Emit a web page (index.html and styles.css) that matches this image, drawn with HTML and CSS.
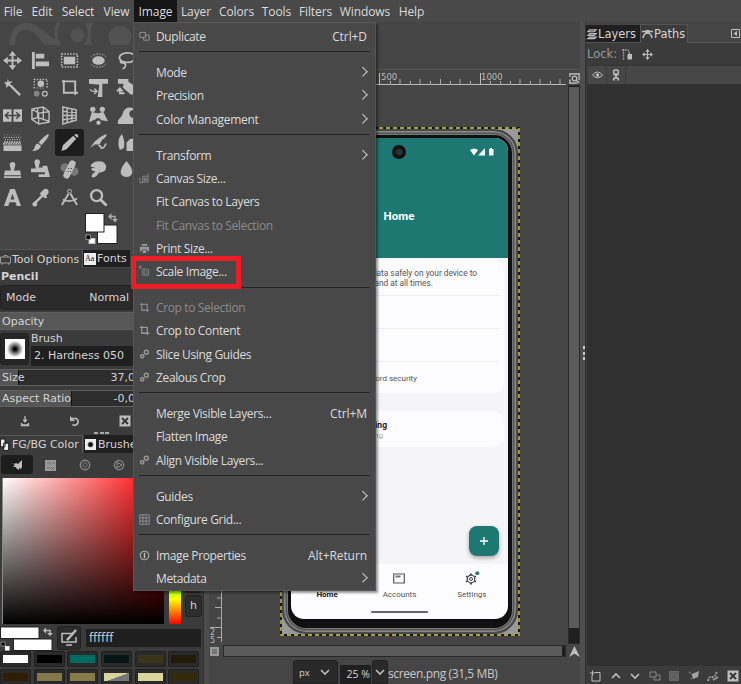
FILE: index.html
```html
<!DOCTYPE html>
<html lang="en">
<head>
<meta charset="utf-8">
<title>Image Editor</title>
<link rel="stylesheet" href="styles.css">
</head>
<body>
<nav class="menubar">
  <span class="m-file">File</span><span class="m-edit">Edit</span><span class="m-select">Select</span><span class="m-view">View</span><span class="m-image open">Image</span><span class="m-layer">Layer</span><span class="m-colors">Colors</span><span class="m-tools">Tools</span><span class="m-filters">Filters</span><span class="m-windows">Windows</span><span class="m-help">Help</span>
</nav>
<main class="workspace">
  <aside class="left">
    <svg class="banner" width="200" height="24" viewBox="0 0 200 24">
      <g fill="#525252" stroke="none"><path d="M8 22C8 8 15 0 25 0C38 0 44 12 54 16C52 10 53 4 55 0H59C54 8 56 16 60 22H44C38 18 35 7 24 7C16 7 13 15 14 22Z"/><path d="M83 0H92C88 8 88 15 91 22H82C87 15 88 7 83 0Z"/><circle cx="76" cy="12.500" r="7"/><path d="M110 22A11.500 11.500 0 1 1 127 22Z"/></g>
    </svg>
    <div class="tools">
      <i><svg viewBox="0 0 20 20"><path d="M10 2V18M2 10H18" stroke-width="2"/><path class="f" d="M10 0L14 5H6ZM10 20L14 15H6ZM0 10L5 6V14ZM20 10L15 6V14Z"/></svg></i>
      <i><svg viewBox="0 0 20 20"><path class="f" d="M1 1H4V19H1ZM5 3H14V8H5ZM5 11H19V16H5Z"/></svg></i>
      <i><svg viewBox="0 0 20 20"><rect x="1.700" y="3.200" width="16.600" height="13.600" stroke-dasharray="1.600 1.400" stroke-width="1.600"/><path class="f" d="M4 6H16V14H4Z"/></svg></i>
      <i><svg viewBox="0 0 20 20"><path d="M2.500 6C6 2 14 2 17.500 6M2.500 14C6 18 14 18 17.500 14" stroke-dasharray="1.500 1.500"/><ellipse class="f" cx="10" cy="10" rx="6.500" ry="4.500"/></svg></i>
      <i><svg viewBox="0 0 20 20"><ellipse cx="11" cy="7" rx="8.500" ry="5" stroke-width="2"/><path d="M4 10C2 15 9 10 9 15C9 17 8 18 6 19" stroke-width="1.700"/></svg></i>
      <i><svg viewBox="0 0 20 20"><path d="M8 8L18 18" stroke-width="2.400"/><path class="f" d="M5 1L6.300 4L10 3.500L7.500 6.300L9.500 9.500L6 8.200L3.200 10.500L3.500 7L1 4.800L4.300 4.300Z"/></svg></i>
      <i><svg viewBox="0 0 20 20"><path d="M3.500 11V1.500H17V11" stroke-dasharray="1.500 1.500" stroke-width="1.500"/><path d="M6 10.500H15" stroke-dasharray="1.500 1.500"/><circle class="f" cx="10.300" cy="6" r="3.500"/><circle cx="6" cy="16.500" r="3" fill="#858585" stroke="none"/><circle cx="14.500" cy="16.500" r="2.500" stroke-width="1.400"/></svg></i>
      <i><svg viewBox="0 0 20 20"><path d="M2 3.500H16V18M4 2V15.500H19" stroke-width="2"/></svg></i>
      <i><svg viewBox="0 0 20 20"><path class="f" d="M0 1H20V6H14V20H9L11 7L0 6Z"/><path d="M1 12Q3 15 8 14M5.500 11L8.500 14L5.500 17" stroke-width="1.400"/></svg></i>
      <i><svg viewBox="0 0 20 20"><path class="f" d="M1 1H12V4L18 8L22 0V14L15 18L6 10L7 6H1Z"/><path d="M3 12V16H8M0 14L3 11L6 14" stroke-width="2"/></svg></i>
      <i><svg viewBox="0 0 20 20"><path class="f" d="M0 3.500H9V16.500H0ZM11 3.500H20V16.500H11Z"/><path d="M3 10H17M6 6.500L2.500 10L6 13.500M14 6.500L17.500 10L14 13.500" stroke="#444" stroke-width="1.600"/></svg></i>
      <i><svg viewBox="0 0 20 20"><path d="M1 3L13 1L19 6V17L8 19L1 14ZM1 3L8 7.500L19 6M8 7.500V19M7 2V12L1 14M7 12L19 16M13 1V15" stroke-width="1.500"/></svg></i>
      <i><svg viewBox="0 0 20 20"><path d="M3 1L17 4V15L3 19ZM3 5.500L17 7M3 10H17M3 14.500L17 12.500M7.500 2V18M12.500 3V17" stroke-width="1.500"/></svg></i>
      <i><svg viewBox="0 0 20 20"><circle class="f" cx="4" cy="3.500" r="2.800"/><circle class="f" cx="14" cy="3.500" r="2.800"/><path class="f" d="M3 6Q9 9 15 6L20 16L13 15Q10 11 7 14L0 17Z"/><circle class="f" cx="10" cy="17.500" r="2.300"/></svg></i>
      <i><svg viewBox="0 0 20 20"><path class="f" d="M1 19C0 13 5 13 6 8C8 1 15 0 19 4C13 4 11 8 15 12H20V19Z"/></svg></i>
      <i><svg viewBox="0 0 20 20"><path d="M1 2H19" stroke-width="1" stroke-dasharray="1 2" opacity=".6"/><path d="M1 4.500H19M2 7H19" stroke-width="1.300" stroke-dasharray="1 1.500"/><path d="M1 9.500H19M0 11.500H19" stroke-width="1.800" stroke-dasharray="1.700 .9"/><path class="f" d="M.5 13H19.500V19H.5Z"/></svg></i>
      <i><svg viewBox="0 0 20 20"><path class="f" d="M18 1Q20 2 16 7L11 13L8 10Q14 3 18 1ZM7.500 11L10.500 14Q9 19 1 19Q4 17 4 14Q5 11 7.500 11Z"/></svg></i>
      <i class="sel"><svg viewBox="0 0 20 20"><path class="f" d="M14 3L17 6L7 17L1.500 19L3 13ZM15 2Q17 0 19 2Q20 4 18 5Z"/></svg></i>
      <i><svg viewBox="0 0 20 20"><path class="f" d="M18 1Q20 3 14 7L11 12H6L1 16L6 9Q13 3 18 1Z"/><path d="M10 14Q12 12 13 16Q16 16 18 11" stroke-width="1.700"/></svg></i>
      <i><svg viewBox="0 0 20 20"><path class="f" d="M5 1Q9 8 7 16L3 18Q-1 8 5 1ZM10 10L14 6H20V19H10Z"/></svg></i>
      <i><svg viewBox="0 0 20 20"><path class="f" d="M7 5A3 3 0 1 1 13 5L11.500 11H18L19 16H1L2 11H8.500ZM1 17H19V19H1Z"/></svg></i>
      <i><svg viewBox="0 0 20 20"><path class="f" d="M4 4A3 3 0 1 1 9 4L8 8H14V13H0V9H5ZM12 6H17L20 18H8V15H15Z"/></svg></i>
      <i><svg viewBox="0 0 20 20"><circle cx="5" cy="8" r="4.500" fill="#777" stroke="none"/><circle cx="15" cy="12" r="4.500" fill="#777" stroke="none"/><path d="M13 4L7 16" stroke-width="7" stroke-linecap="round"/><path d="M9 8.500V9.500M12 8.500V9.500M8.500 11.500V12.500M11 11.500V12.500" stroke="#444" stroke-width="1.200"/></svg></i>
      <i><svg viewBox="0 0 20 20"><path class="f" d="M2 5Q7 0 15 2Q20 6 17 11Q13 14 11 13Q6 20 3 18Q2 15 7 12L3 11Q1 8 7 8L2 7Z"/></svg></i>
      <i><svg viewBox="0 0 20 20"><path class="f" d="M10 1Q17 9 16 14A6.300 5.500 0 0 1 4 14Q3 9 10 1Z"/></svg></i>
      <i><svg viewBox="0 0 20 20"><path class="f" d="M7.500 1H12.500L19 19H14.500L13 15H7L5.500 19H1ZM8 12H12L10 6Z" fill-rule="evenodd"/></svg></i>
      <i><svg viewBox="0 0 20 20"><path class="f" d="M12 3Q15-1 18 2Q20 5 16 8L17 10L15 11L9 6L11 4Z"/><path d="M12 8L4 16" stroke-width="2.500"/><circle class="f" cx="4" cy="17" r="2.500"/></svg></i>
      <i><svg viewBox="0 0 20 20"><circle cx="10" cy="3.500" r="2"/><path d="M9 6L2 18M11 6L18 18" stroke-width="2"/><path d="M3 12Q10 16 18 11" stroke-width="1.800"/></svg></i>
      <i><svg viewBox="0 0 20 20"><circle cx="8" cy="8" r="5.800" stroke-width="2.500"/><path d="M12 12L18.500 18.500" stroke-width="3"/></svg></i>
    </div>
    <svg class="swatches" width="133" height="38" viewBox="0 211 133 38">
      <rect x="97.500" y="225" width="19.500" height="18.500" fill="#fff" stroke="#222"/><rect x="85.500" y="213.500" width="18.500" height="18.500" fill="#fff" stroke="#222"/>
      <path d="M110 216.500H115V220" stroke="#aaa" stroke-width="1.500"/><path d="M111.500 213V220L108 216.500ZM112 219H118L115 222.500Z" fill="#aaa" stroke="none"/>
      <rect x="89" y="238.500" width="6" height="5" fill="#fff"/><rect x="86" y="235" width="4.500" height="4.500" fill="#000" stroke="#aaa" stroke-width=".8"/>
    </svg>
    <div class="tabs opt"><span class="tab on"><svg width="11" height="12" viewBox="0 0 11 12"><path d="M.5 4H10.500V10H.5ZM3 4L4 2.500H7L8 4M2 10V12M9 10V12" stroke="#999"/></svg><b>Tool Options</b></span><span class="tab dark fonts"><svg width="12" height="12" viewBox="0 0 12 12"><path fill="#eee" stroke="none" d="M0 0H12V12H0Z"/><text x="1" y="8" font-family="Liberation Serif" font-size="8" fill="#111" stroke="none">Aa</text></svg><b>Fonts</b></span></div>
    <div class="toolname">Pencil</div>
    <div class="mode"><span>Mode</span><span>Normal</span></div>
    <div class="slider opacity">Opacity</div>
    <div class="brush"><span class="preview"><i></i></span><div><span class="cap">Brush</span><span class="entry">2. Hardness 050</span></div></div>
    <div class="slider size"><span>Size</span><span>37,0</span></div>
    <div class="slider aspect"><span>Aspect Ratio</span><span>-0,0</span></div>
    <div class="optbtns">
      <svg viewBox="0 0 12 12"><path d="M6 1V6M2.500 10H9.500M2.500 8V10.500H9.500V8" stroke-width="1.300"/><path class="f" d="M3.500 4.500H8.500L6 8Z"/></svg>
      <svg viewBox="0 0 12 12"><path d="M3 3.500H7A3.500 3.500 0 1 1 3.500 9.500" stroke-width="1.600"/><path class="f" d="M1 1V6H6Z"/></svg>
      <svg viewBox="0 0 12 12"><path class="f" d="M.5 .5H11.500V11.500H.5Z"/><path d="M3 3L9 9M9 3L3 9" stroke="#333" stroke-width="1.800"/></svg>
    </div>
    <div class="grip"></div>
    <div class="tabs col"><span class="tab on"><svg width="10" height="14" viewBox="0 0 11 14"><path fill="#eee" stroke="#111" d="M4 5H9.500V13H4ZM.5 .5H5.500V9H.5Z"/></svg><b>FG/BG Color</b></span><span class="tab dark"><svg width="11" height="11" viewBox="0 0 11 11"><path fill="#eee" stroke="none" d="M0 0H11V11H0Z"/><circle cx="5.500" cy="5.500" r="2.600" fill="#111" stroke="#888" stroke-width=".7"/></svg><b>Brushes</b></span></div>
    <div class="modes">
      <span class="on"><svg viewBox="0 0 12 12"><path class="f" d="M0 4L3 5L5 4L7 5L11 1V8L10 10L8 9V11L5 9V8L2 8L4 6Z"/></svg></span>
      <span><svg viewBox="0 0 12 12"><path fill="#999" stroke="none" d="M0 1H11V12H0Z"/><path d="M2 4H4M5 3V6M7 4H10M2 9H5M6 8L9 11M9 8L6 11" stroke="#666" stroke-width=".9"/></svg></span>
      <span><svg viewBox="0 0 12 12"><circle cx="6" cy="6" r="4.700" stroke="#888" stroke-width="1.400"/><circle cx="6" cy="6" r="2.200" stroke="#777"/></svg></span>
      <span><svg viewBox="0 0 12 12"><circle cx="6" cy="6" r="4.700" stroke="#888" stroke-width="1.200"/><path d="M4 3L9 6L4 9Z" stroke="#999"/></svg></span>
    </div>
    <div class="picker"><div class="sv"></div><div class="hue"></div><div class="chan"><span></span><span>h</span></div></div>
    <div class="hex">
      <svg width="54" height="26" viewBox="0 0 54 26"><rect x="13.500" y="13" width="38.500" height="11.500" fill="#fff" stroke="#222"/><rect x=".5" y="1" width="38.500" height="11.500" fill="#fff" stroke="#222"/><path d="M45 4.500H50V8" stroke="#bbb" stroke-width="1.500"/><path fill="#bbb" stroke="none" d="M46 1.500V7.500L43 4.500ZM47 7H53L50 10Z"/><path fill="#fff" stroke="none" d="M5 20H9.500V24.500H5Z"/><rect x="1" y="16" width="4" height="4" fill="#000" stroke="#aaa" stroke-width=".7"/></svg>
      <span class="pick"><svg width="18" height="18" viewBox="0 0 18 18"><path d="M12 4.500H2V13H16V8M6 16H12" stroke-width="1.500"/><path d="M16 1L9 9L7 11" stroke-width="2.500"/></svg></span>
      <span class="hexval">ffffff</span>
    </div>
    <div class="pal"><i><b class="c1"></b></i><i><b class="c2"></b></i><i><b class="c3"></b></i><i><b class="c4"></b></i><i><b class="c5"></b></i><i><b class="c6"></b></i><i><b class="c7"></b></i><i><b class="c8"></b></i><i><b class="c9"></b></i><i><b class="c10"></b></i><i><b class="c11"></b></i><i><b class="c12"></b></i></div>
  </aside>
  <section class="center">
    <div class="toprule">
      <svg width="357" height="17" viewBox="209 69 357 17"><path d="M222 84.500H566" stroke="#bbb"/><path d="M379.500 73V85M480.500 73V85" stroke="#bbb"/><path d="M390.500 81V85M400 79V85M410.500 81V85M420 79V85M430.500 81V85M440.500 79V85M450.500 81V85M460 79V85M470.500 81V85M490.500 81V85M500.500 81V85M510.500 81V85M520 79V85M530.500 81V85M540 79V85M550.500 81V85M560 79V85" stroke="#aaa"/></svg>
      <b class="n5">500</b><b class="n10">1000</b>
      <svg class="zoomfit" width="11" height="11" viewBox="0 0 12 12"><path d="M1 4V1H11V8M1 7V11H9" stroke-width="1.800" stroke="#aaa"/><circle cx="6" cy="6" r="2.500" stroke-width="1.400"/><path d="M8 8L11 11" stroke-width="1.600"/></svg>
    </div>
    <div class="viewrow">
      <svg class="vrule" width="14" height="559" viewBox="209 85 14 559"><path d="M221.500 85V642" stroke="#aaa"/><path d="M217 598H221M215 607.500H221M217 618H221M210 627.500H221M217 637.500H221" stroke="#aaa"/><g font-family="DejaVu Sans" font-size="8" fill="#bbb" stroke="none"><text x="210" y="635">2</text><text x="210" y="643">5</text></g></svg>
      <div class="canvas">
        <div class="image">
          <div class="phone">
            <div class="screen">
              <div class="appbar"><span class="cam"></span><span class="title">Home</span><svg class="status" width="25" height="8" viewBox="0 0 25 8"><path fill="#fff" stroke="none" d="M0 2Q4-1 8 2L4 7.500ZM8 7.500L15 0V7.500ZM19 1H20V0H22V1H23.500V7.500H19Z"/></svg></div>
              <div class="content">
                <div class="card one"><p><span class="l1">Store data safely on your device to</span><span class="l2">any time and at all times.</span></p><div class="r"></div><div class="r"></div><div class="r last">Password security</div></div>
                <div class="card two"><strong>Autofilling</strong><span>Not running</span></div>
                <span class="fab"><svg width="8" height="8" viewBox="0 0 8 8"><path d="M4 0V8M0 4H8" stroke="#fff" stroke-width="1.300"/></svg></span>
              </div>
              <div class="nav"><div class="navi"><span class="cur"><i></i>Home</span><span><svg width="12" height="11" viewBox="0 0 12 11"><path d="M.7 1H11.300V10H.7Z" stroke="#555" stroke-width="1.200"/><path d="M2.500 3.500H7.500" stroke="#777" stroke-width="2"/></svg>Accounts</span><span><svg width="14" height="13" viewBox="0 0 14 13"><circle cx="6" cy="7" r="3.800" stroke="#444" stroke-width="1.200"/><circle cx="6" cy="7" r="1.500" stroke="#444"/><path d="M6 1.500V3M6 11V12.500M1 4.300L2.500 5M9.500 9L11 9.800M1 9.800L2.500 9M9.500 5L11 4.300" stroke="#444" stroke-width="1.800"/><circle cx="12.300" cy="1.200" r="1.900" fill="#1e7872" stroke="none"/></svg>Settings</span></div><i class="bar"></i></div>
            </div>
          </div>
          <svg class="ants" width="240" height="509" viewBox="0 0 240 509"><rect x="1" y="1" width="238" height="507" stroke="#161616" stroke-width="2"/><rect x="1" y="1" width="238" height="507" stroke="#d2d04a" stroke-width="1.400" stroke-dasharray="4 3"/></svg>
        </div>
      </div>
      <div class="vscroll"><i></i></div>
    </div>
    <div class="hrow"><i class="quick"></i><div class="hscroll"><i></i></div><svg width="11" height="11" viewBox="0 0 12 12"><path class="f" d="M6 0L12 12L6 8.500L0 12Z"/></svg></div>
    <div class="statusbar"><span class="unit">px<svg width="10" height="6" viewBox="0 0 10 6"><path d="M1 1L5 5L9 1" stroke-width="1.600"/></svg></span><span class="pct">25 %</span><span class="drop"><svg width="10" height="6" viewBox="0 0 10 6"><path d="M1 1L5 5L9 1" stroke-width="1.600"/></svg></span><span class="fname">screen.png (31,5 MB)</span></div>
  </section>
  <div class="split"><i></i></div>
  <aside class="right">
    <div class="rtabs"><span class="tab dark"><svg width="10" height="12" viewBox="0 0 11 12"><path d="M3 1.500H10L8 3.500H1ZM3 5.500H10L8 7.500H1ZM3 9.500H10L8 11H1Z" stroke-width="1.300"/></svg><b>Layers</b></span><span class="tab on"><svg width="11" height="8" viewBox="0 0 11 8"><path d="M0 1.500H11M1 8Q2 3 5.500 3Q9 3 10 8" stroke-width="1.600"/><path class="f" d="M3.500 0H7.500V4H3.500Z"/></svg><b>Paths</b></span><svg class="cfg" width="9" height="9" viewBox="0 0 9 9"><path d="M.5 .5H8.500V8.500H.5Z"/><path class="f" d="M6 2V7L2.500 4.500Z"/></svg></div>
    <div class="lock"><span>Lock:</span><svg width="12" height="12" viewBox="0 0 12 12"><path d="M2.500 1V12M1 2H5Q8 1 8.500 6" stroke="#999" stroke-dasharray="2 .8" stroke-width="1.400"/><path class="f" d="M6.500 6H11V11.500H6.500Z"/></svg><svg width="11" height="11" viewBox="0 0 20 20"><path d="M10 2V18M2 10H18" stroke-width="2"/><path class="f" d="M10 0L14 5H6ZM10 20L14 15H6ZM0 10L5 6V14ZM20 10L15 6V14Z"/></svg></div>
    <div class="lhead"><span><svg width="11" height="8" viewBox="0 0 11 8"><path d="M.5 4Q5.500-2 10.500 4Q5.500 9.500 .5 4Z"/><circle class="f" cx="5.500" cy="4" r="1.700"/></svg></span><span><svg width="8" height="12" viewBox="0 0 8 12"><rect x="1.700" y="1" width="4.600" height="5" rx="1.500" stroke-width="1.600"/><path d="M4 4V8.500M1.700 11.500V10L4 8L6.300 10V11.500" stroke-width="1.700"/></svg></span></div>
    <div class="llist"></div>
    <div class="lbtns">
      <svg viewBox="0 0 12 12"><path d="M5 2.500H10V11H2V5M0 3H5M2.500 .5V5.500"/></svg>
      <svg viewBox="0 0 12 12"><path d="M2 8L6 4L10 8" stroke-width="1.700"/></svg>
      <svg viewBox="0 0 12 12"><path d="M2 4L6 8L10 4" stroke-width="1.700"/></svg>
      <svg viewBox="0 0 12 12"><path d="M1 2H7V7H1ZM5 7V10H11V5H7" stroke="#888"/></svg>
      <svg viewBox="0 0 12 12"><path d="M1.500 1.500H10.500V10.500H1.500Z" stroke="#666" fill="#5c5c5c"/><circle cx="6" cy="6.500" r="2.800" stroke="#888" stroke-dasharray="1 1"/></svg>
      <svg viewBox="0 0 12 12"><path d="M1 2L6 6L2 10" stroke="#777" stroke-width="1.500" stroke-dasharray="2 1"/><path class="f" d="M4 4L11 1L10 7L5 9Z" opacity=".8"/></svg>
      <svg viewBox="0 0 12 12"><path d="M1 11Q2 6 5 7T10 1" stroke-dasharray="2 1" stroke="#999" stroke-width="2"/><path d="M6 10L11 7" stroke="#999" stroke-width="2"/></svg>
      <svg viewBox="0 0 12 12"><path class="f" d="M.5 .5H11.500V11.500H.5Z"/><path d="M3 3L9 9M9 3L3 9" stroke="#333" stroke-width="1.800"/></svg>
    </div>
  </aside>
</main>
<div class="menu">
  <div class="it"><svg viewBox="0 0 12 12"><path d="M1 1.500H7V7H1ZM5 7V10H11V4.500H7"/></svg><span>Duplicate</span><kbd>Ctrl+D</kbd></div>
  <hr>
  <div class="it"><span>Mode</span><em></em></div>
  <div class="it"><span>Precision</span><em></em></div>
  <div class="it"><span class="wide">Color Management</span><em></em></div>
  <hr>
  <div class="it"><span>Transform</span><em></em></div>
  <div class="it"><svg viewBox="0 0 12 12"><path d="M4 3.500H10V10H4ZM1 5V10.500H4M10 1V3" stroke="#8a8a8a"/><path d="M5 5H9V9H5Z" fill="#777" stroke="none"/></svg><span>Canvas Size...</span></div>
  <div class="it"><span>Fit Canvas to Layers</span></div>
  <div class="it off"><span>Fit Canvas to Selection</span></div>
  <div class="it"><svg viewBox="0 0 12 12"><path fill="#999" stroke="none" d="M3 1H9V3H3ZM1 4H11V9H9V7H3V9H1ZM4 8H8V11H4Z"/></svg><span>Print Size...</span></div>
  <div class="it"><svg viewBox="0 0 12 12"><path d="M4 3.500H10.500V10H4ZM1 1L3 3M.5 3V.5H3" stroke="#8a8a8a"/><path d="M5.500 5.500H8.500V8.500H5.500Z" stroke="#777"/></svg><span>Scale Image...</span></div>
  <hr>
  <div class="it off"><svg viewBox="0 0 12 12"><path d="M1 2.500H9V11M3 1V9H11" stroke-width="1.400"/></svg><span>Crop to Selection</span></div>
  <div class="it"><svg viewBox="0 0 12 12"><path d="M1 2.500H9V11M3 1V9H11" stroke-width="1.400"/></svg><span>Crop to Content</span></div>
  <div class="it"><svg viewBox="0 0 12 12"><circle cx="3.500" cy="8" r="1.800" stroke-width="1.600"/><circle cx="8" cy="3.500" r="2.200" stroke-width="1.500"/></svg><span>Slice Using Guides</span></div>
  <div class="it"><svg viewBox="0 0 12 12"><circle cx="3.500" cy="8" r="1.800" stroke-width="1.600"/><circle cx="8" cy="3.500" r="2.200" stroke-width="1.500"/></svg><span>Zealous Crop</span></div>
  <hr>
  <div class="it"><span>Merge Visible Layers...</span><kbd>Ctrl+M</kbd></div>
  <div class="it"><span>Flatten Image</span></div>
  <div class="it"><svg viewBox="0 0 12 12"><circle cx="3.500" cy="8" r="1.800" stroke-width="1.600"/><circle cx="8" cy="3.500" r="2.200" stroke-width="1.500"/></svg><span>Align Visible Layers...</span></div>
  <hr>
  <div class="it"><span>Guides</span><em></em></div>
  <div class="it"><svg viewBox="0 0 12 12"><path d="M.8 .8H11.200V11.200H.8ZM4.200 1V11M7.700 1V11M1 4.200H11M1 7.700H11" stroke-width=".9"/></svg><span>Configure Grid...</span></div>
  <hr>
  <div class="it"><svg viewBox="0 0 12 12"><circle cx="6" cy="6" r="4.700" stroke="#aaa" stroke-width="1.200"/><path d="M6 3V9" stroke="#bbb" stroke-width="1.500"/></svg><span>Image Properties</span><kbd>Alt+Return</kbd></div>
  <div class="it"><span>Metadata</span><em></em></div>
</div>
<div class="highlight"></div>
</body>
</html>
```
FILE: styles.css
```css
* { box-sizing: border-box; }
body { margin: 0; width: 741px; height: 684px; overflow: hidden; position: relative; background: #454545; color: #d4d4d4; font: 11px "DejaVu Sans", sans-serif; }
svg { fill: none; stroke: #bdbdbd; display: block; flex: none; overflow: visible; }
svg .f { fill: #bdbdbd; stroke: none; }
b { font-weight: normal; }

.menubar { height: 22px; display: flex; background: #494949; font: 12px/24px "Open Sans", sans-serif; letter-spacing: -.1px; margin-left: -1px; color: #dcdcdc; }
.menubar span { text-align: center; white-space: nowrap; height: 22px; }
.m-file { width: 28px; } .m-edit { width: 30px; } .m-select { width: 42px; } .m-view { width: 35px; }
.m-image { width: 43px; } .m-layer { width: 38px; } .m-colors { width: 43px; } .m-tools { width: 37px; }
.m-filters { width: 41px; } .m-windows { width: 58px; } .m-help { width: 35px; }
.menubar .open { background: #151515; }

.workspace { display: flex; height: 662px; }
.left { width: 203px; flex: none; display: flex; flex-direction: column; overflow: hidden; background: #3b3b3b; }
.left > * { flex: none; }
.banner { background: #454545; width: 203px; height: 25px; padding-top: 1px; }
.tools { display: grid; grid-template-columns: repeat(5, 28.6px); grid-auto-rows: 27.3px; background: #454545; height: 164px; margin-left: -2px; }
.tools i { display: flex; align-items: center; justify-content: center; border-radius: 3px; }
.tools svg { width: 19px; height: 19px; }
.tools .sel { background: #1d1d1d; }
.swatches { background: #454545; width: 203px; padding-right: 70px; }
.tabs { display: flex; background: #3f3f3f; }
.tab { display: flex; align-items: center; gap: 1px; white-space: nowrap; }
.tab.dark { background: #1f1f1f; }
.tab.on { background: #3b3b3b; border: 1px solid #545454; border-bottom: 0; border-left: 0; }
.opt { height: 19px; background: #454545; }
.opt .on { width: 83px; }
.fonts { width: 47px; height: 17px; margin-top: 1px; padding-left: 1px; }
.toolname { font-weight: bold; line-height: 17px; height: 17px; padding-left: 1px; }
.mode { height: 25px; background: #2a2a2a; border: 1px solid #222; border-radius: 3px; display: flex; justify-content: space-between; align-items: center; padding: 0 73px 0 5px; }
.slider { height: 18px; background: #2d2d2d; border-top: 1px solid #606060; border-bottom: 1px solid #606060; display: flex; align-items: center; justify-content: space-between; padding: 0 68px 0 2px; }
.opacity { margin-top: 2px; background: #575757; }
.brush { height: 38px; display: flex; margin-top: 1px; padding-top: 2px; }
.preview { width: 29px; height: 32px; background: #262626; border: 1px solid #202020; border-radius: 3px; display: flex; align-items: center; justify-content: center; }
.preview i { width: 20px; height: 20px; background: radial-gradient(circle, #000 8%, #777 30%, #fff 58%); }
.brush > div { display: flex; flex-direction: column; flex: 1; margin-left: 2px; }
.cap { height: 13px; line-height: 12px; }
.entry { background: #1f1f1f; height: 20px; line-height: 20px; padding-left: 3px; }
.size { background: linear-gradient(90deg, #555 18px, #111 18px, #111 19px, #2d2d2d 19px); height: 17px; }
.aspect { background: linear-gradient(90deg, #555 71px, #111 71px, #111 72px, #2d2d2d 72px); height: 17px; margin-top: 4px; }
.optbtns { height: 25px; display: flex; padding: 8px 0 0 19px; gap: 38px; }
.optbtns svg { width: 12px; height: 12px; }
.grip { width: 15px; height: 2px; margin: 0 0 1px 94px; background: repeating-linear-gradient(90deg, #aaa 0 4px, transparent 4px 5.500px); }
.col { height: 18px; }
.col .on { width: 83px; gap: 2px; }
.col .dark { margin-left: 1px; padding-left: 1px; flex: 1; gap: 2px; }
.modes { height: 23px; padding: 2px 0 2px 1px; display: flex; gap: 2px; }
.modes span { width: 32px; display: flex; align-items: center; justify-content: center; border-radius: 3px; }
.modes svg { width: 12px; height: 12px; }
.modes .on { background: #1d1d1d; }
.picker { display: flex; height: 150px; padding: 2px 0 0 2px; }
.sv { width: 162px; height: 146px; background: linear-gradient(0deg, #000, transparent), linear-gradient(90deg, #fff, #f00); border-left: 1px solid #888; }
.hue { width: 12px; height: 146px; margin-left: 5px; background: linear-gradient(0deg, #f00, #ff0 17%, #0f0 33%, #0ff 50%, #00f 67%, #f0f 83%, #f00); }
.chan { margin-left: 4px; width: 17px; display: flex; flex-direction: column; justify-content: flex-end; gap: 2px; padding-bottom: 9px; }
.chan span { height: 22px; background: #2d2d2d; border: 1px solid #222; border-radius: 3px; text-align: center; line-height: 20px; }
.hex { height: 25px; display: flex; align-items: flex-start; }
.pick { width: 24px; height: 24px; margin-left: 3px; background: #2b2b2b; border: 1px solid #222; border-radius: 3px; display: flex; align-items: center; justify-content: center; }
.hexval { margin: 3px 2px 0 5px; flex: 1; height: 18px; background: #1f1f1f; padding-left: 3px; font: 12px/18px "Open Sans", sans-serif; }
.pal { display: grid; grid-template-columns: repeat(6, 31px); column-gap: 2.700px; row-gap: 2px; grid-auto-rows: 16px; }
.pal i { background: #2a2a2a; border: 1px solid #202020; border-radius: 2px; display: flex; align-items: center; justify-content: center; }
.pal b { width: 25px; height: 8px; }
.c1 { background: #fff; } .c2 { background: #000; } .c3 { background: #006b63; } .c4 { background: #051614; } .c5 { background: #3d3519; } .c6 { background: #231b08; }
.c7 { background: #2e1f04; } .c8 { background: #857749; } .c9 { background: #857b49; } .c10 { background: linear-gradient(160deg, #d8d49b 52%, #777 53%); } .c11 { background: #d9d59d; } .c12 { background: #342a08; }

.center { width: 377px; flex: none; border-left: 1px solid #303030; display: flex; flex-direction: column; background: #454545; padding: 47px 0 0 5px; box-shadow: inset 5px 0 #4c4c4c; }
.toprule { height: 16px; position: relative; border-top: 1px solid #555; display: flex; }
.toprule > svg:first-child { margin-top: -1px; }
.toprule b { position: absolute; top: 2px; font-size: 8.500px; line-height: 10px; color: #bbb; }
.n5 { left: 172px; } .n10 { left: 272px; }
.zoomfit { margin: 3px 0 0 3px; }
.viewrow { height: 559px; display: flex; }
.canvas { width: 345px; height: 559px; padding: 42px 0 0 57px; }
.image { width: 240px; height: 509px; position: relative; background: #999; }
.ants { position: absolute; left: 0; top: 0; }
.phone { position: absolute; left: 2px; top: 2px; width: 236px; height: 505px; border-radius: 24px; background: #111; border: 2px solid #4a4a4a; box-shadow: inset 0 0 0 1.500px #888, inset 0 0 0 3px #555, inset 0 0 0 4px #777; padding: 7px; }
.screen { width: 217px; height: 481px; border-radius: 13px; overflow: hidden; background: #fcfcfe; color: #555; font: 8px/10px Roboto, sans-serif; display: flex; flex-direction: column; box-shadow: 0 0 2px #000; }
.appbar { height: 120px; background: #1e7872; position: relative; display: flex; justify-content: center; align-items: center; padding-top: 36px; flex: none; }
.title { color: #fff; font-weight: bold; font-size: 11.500px; margin-right: 1px; }
.cam { position: absolute; left: 101px; top: 7px; width: 14px; height: 14px; border-radius: 50%; background: radial-gradient(#30343d 20%, #101010 45%); }
.status { position: absolute; left: 179px; top: 10px; }
.content { height: 306px; background: #f5f5f8; position: relative; flex: none; }
.content::before { content: ""; display: block; height: 2px; }
.card { background: #fcfcfe; border-radius: 10px; width: 210px; margin-left: 3px; text-align: right; white-space: nowrap; }
.one { height: 133px; padding: 8px 5px 0; }
.one p { margin: 0; height: 27px; font-size: 8.300px; }
.one p span { display: block; }
.l1 { padding-right: 22px; }
.l2 { padding-right: 66px; }
.r { height: 33px; border-top: 1px solid #eee; }
.last { padding: 12px 82px 0 0; }
.two { height: 36px; margin-top: 18px; padding: 9px 117px 0 0; display: flex; flex-direction: column; gap: 1px; color: #aaa; font-size: 8.500px; }
.two strong { color: #222; }
.two span { font-size: 8px; padding-right: 4px; }
.fab { position: absolute; left: 178px; top: 268px; width: 30px; height: 30px; background: #1e7872; border-radius: 8px; display: flex; align-items: center; justify-content: center; box-shadow: 0 2px 4px #0005; }
.nav { flex: 1; }
.navi { display: flex; height: 44px; }
.navi span { flex: 1; display: flex; flex-direction: column; align-items: center; padding-top: 9px; gap: 6px; }
.navi span:last-child { padding-top: 8px; gap: 5px; }
.navi i { height: 11px; }
.cur { font-weight: bold; color: #222; }
.bar { display: block; width: 57px; height: 2px; background: #666; margin: 3px auto 0; border-radius: 1px; }
.vscroll { width: 12px; background: #1f1f1f; border: 1px solid #2a2a2a; padding-top: 1px; }
.vscroll i { display: block; height: 541px; background: #5b5b5b; }
.hrow { height: 15px; display: flex; padding-top: 1px; gap: 4px; }
.quick { width: 9px; height: 9px; margin: 2px 0 0 1px; background: #777; border: 2px solid #999; }
.hscroll { width: 344px; height: 12px; background: #1f1f1f; border: 1px solid #292929; }
.hscroll i { display: block; width: 338px; height: 10px; background: #5b5b5b; }
.hrow svg { margin: 1px 0 0 -1px; }
.statusbar { display: flex; height: 25px; padding: 1px 0 0 84px; align-items: stretch; font: 12px/27px "Open Sans", sans-serif; white-space: nowrap; }
.unit { width: 45px; background: #292929; border: 1px solid #222; border-radius: 3px 3px 0 0; font-size: 9.500px; padding: 0 7px 0 5px; display: flex; justify-content: space-between; align-items: center; }
.pct { width: 31px; margin-left: 2px; background: #1f1f1f; font-size: 10.500px; text-align: right; margin-top: 5px; line-height: 18px; padding-right: 1px; }
.drop { width: 16px; margin-left: 1px; background: #292929; border: 1px solid #222; border-radius: 3px 3px 0 0; display: flex; align-items: center; justify-content: center; }
.fname { margin-left: 0; color: #c8c8c8; letter-spacing: -.38px; }

.split { width: 5px; flex: none; background: #4e4e4e; display: flex; align-items: center; justify-content: flex-end; }
.split i { width: 2px; height: 14px; background: repeating-linear-gradient(180deg, #ccc 0 3px, transparent 3px 5.500px); }
.right { width: 156px; flex: none; display: flex; flex-direction: column; background: #3b3b3b; border-left: 1px solid #303030; }
.rtabs { height: 21px; padding-top: 2px; background: #454545; display: flex; border-bottom: 1px solid #555; font-size: 11.500px; }
.rtabs .dark { width: 54px; padding-left: 1px; margin-top: 1px; gap: 1px; }
.rtabs .on { width: 48px; padding-left: 1px; border-left: 1px solid #545454; margin-bottom: -1px; }
.cfg { margin: 5px 0 0 43px; }
.lock { height: 22px; display: flex; align-items: center; gap: 9px; color: #999; padding-left: 1px; font-size: 11.500px; }
.lock span { margin-right: -5px; }
.lhead { height: 20px; background: #474747; margin-left: 2px; display: flex; border-top: 1px solid #333; border-bottom: 1px solid #333; }
.lhead span { width: 19px; display: flex; align-items: center; justify-content: center; border-right: 1px solid #383838; }
.llist { height: 581px; margin-left: 1px; background: #303030; flex: none; }
.lbtns { display: flex; padding: 4px 0 0 4px; gap: 7.500px; }
.lbtns svg { width: 12px; height: 12px; }

.menu { position: absolute; left: 133px; top: 22px; width: 243px; height: 569px; background: #484848; border: 1px solid #575757; padding-top: 2px; font: 12px "Open Sans", sans-serif; letter-spacing: -.36px; box-shadow: 2px 2px 2px #0006; }
.it { height: 23.300px; display: grid; grid-template-columns: 11px 1fr auto; column-gap: 6px; padding: 0 8px 0 5px; align-items: center; color: #dcdcdc; white-space: nowrap; }
.it svg { width: 11px; height: 11px; stroke: #999; grid-column: 1; }
.it span { grid-column: 2; }
.it .wide { letter-spacing: -.3px; }
.it svg, .it span, .it kbd, .it em { grid-row: 1; }
.it kbd { font: inherit; grid-column: 3; letter-spacing: -.08px; }
.it em { width: 7px; height: 7px; border: solid #ccc; border-width: 1.500px 1.500px 0 0; transform: rotate(45deg) translate(-1px, 0); grid-column: 3; }
.off { color: #8b8b8b; }
.it.off svg { stroke: #858585; }
.menu hr { margin: 3.200px 5px 8.500px 5px; height: 1px; border: 0; background: #242424; }
.highlight { position: absolute; left: 131px; top: 256px; width: 110px; height: 33px; border: 5px solid #ee1c25; }
```
